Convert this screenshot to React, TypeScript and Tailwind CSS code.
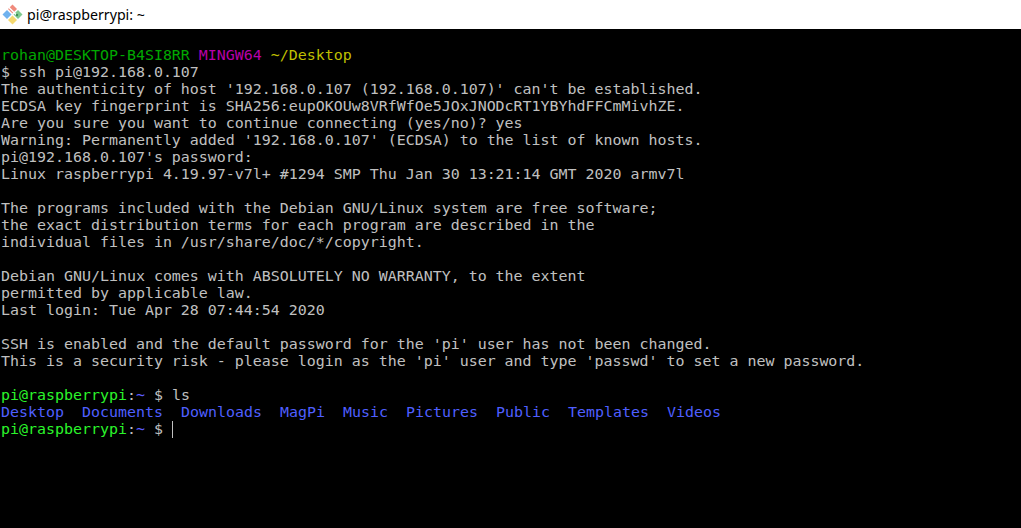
const L = "h-[17px] whitespace-pre";
const lines = [
"The authenticity of host '192.168.0.107 (192.168.0.107)' can't be established.",
"ECDSA key fingerprint is SHA256:eupOKOUw8VRfWfOe5JOxJNODcRT1YBYhdFFCmMivhZE.",
"Are you sure you want to continue connecting (yes/no)? yes",
"Warning: Permanently added '192.168.0.107' (ECDSA) to the list of known hosts.",
"pi@192.168.0.107's password:",
"Linux raspberrypi 4.19.97-v7l+ #1294 SMP Thu Jan 30 13:21:14 GMT 2020 armv7l",
"",
"The programs included with the Debian GNU/Linux system are free software;",
"the exact distribution terms for each program are described in the",
"individual files in /usr/share/doc/*/copyright.",
"",
"Debian GNU/Linux comes with ABSOLUTELY NO WARRANTY, to the extent",
"permitted by applicable law.",
"Last login: Tue Apr 28 07:44:54 2020",
"",
"SSH is enabled and the default password for the 'pi' user has not been changed.",
"This is a security risk - please login as the 'pi' user and type 'passwd' to set a new password.",
"",
];
export default function App() {
  return (
    <div className="w-[1021px] h-[528px] bg-black flex flex-col overflow-hidden">
      <div className="h-[29px] bg-white flex items-center gap-[4px] pl-[2px] shrink-0">
        <svg width="21" height="21" viewBox="0 0 21 21">
          <polygon points="10.5,0.5 15,5 10.5,9.5 6,5" fill="#f08a7c" />
          <polygon points="5,6 9.5,10.5 5,15 0.5,10.5" fill="#6fb2ee" />
          <polygon points="16,6 20.5,10.5 16,15 11.5,10.5" fill="#7fc98e" />
          <polygon points="10.5,11.5 15,16 10.5,20.5 6,16" fill="#f5d96f" />
          <path d="M6.5 3 L15 11.5" stroke="#ffffff" strokeWidth="1.4" />
          <circle cx="15" cy="11" r="1.2" fill="#3f8f55" />
        </svg>
        <span className="text-[14.2px] text-black font-['Noto_Sans',sans-serif]">pi@raspberrypi: ~</span>
      </div>
      <div className="pt-[18px] pl-[1px] text-[14.95px] leading-[17px] font-['DejaVu_Sans_Mono',monospace] text-[#c0c0c0]">
        <div className={L}><span className="text-[#00a800]">rohan@DESKTOP-B4SI8RR </span><span className="text-[#b800a8]">MINGW64 </span><span className="text-[#bfbf00]">~/Desktop</span></div>
        <div className={L}>$ ssh pi@192.168.0.107</div>
        {lines.map((t, i) => <div key={i} className={L}>{t}</div>)}
        <div className={L}><span className="text-[#2bf52b]">pi@raspberrypi</span>:<span className="text-[#5c5cff]">~</span> $ ls</div>
        <div className={L + " flex text-[#4f5fff]"}>
          <span className="w-[81px]">Desktop</span><span className="w-[99px]">Documents</span><span className="w-[99px]">Downloads</span><span className="w-[63px]">MagPi</span><span className="w-[63px]">Music</span><span className="w-[90px]">Pictures</span><span className="w-[72px]">Public</span><span className="w-[99px]">Templates</span><span>Videos</span>
        </div>
        <div className={L + " flex items-center"}><span><span className="text-[#2bf52b]">pi@raspberrypi</span>:<span className="text-[#5c5cff]">~</span> $ </span><span className="w-px h-[17px] bg-[#c0c0c0]" /></div>
      </div>
    </div>
  );
}
